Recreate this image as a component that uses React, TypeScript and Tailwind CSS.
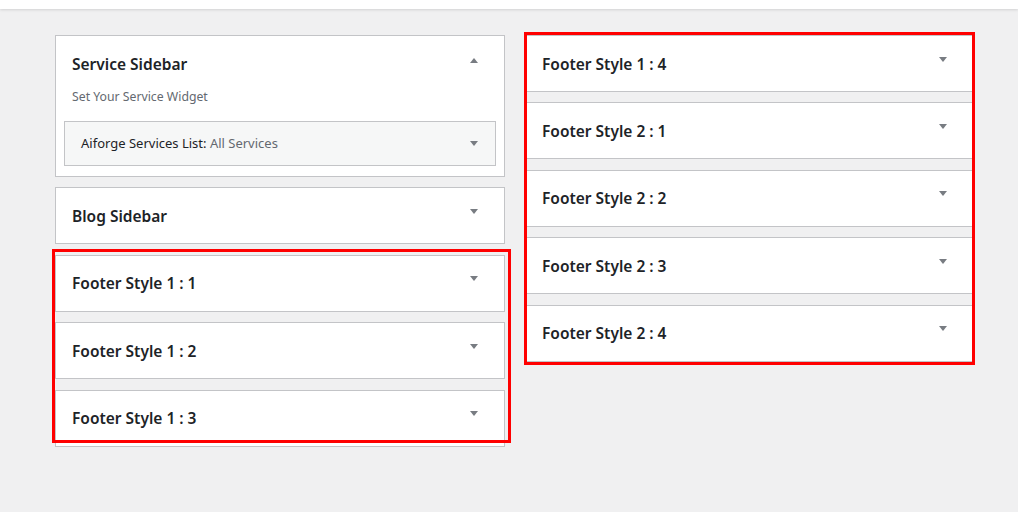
import React from 'react';

const Arrow: React.FC<{ up?: boolean }> = ({ up }) => (
  <svg width="10" height="6" viewBox="0 0 10 6" className="shrink-0" aria-hidden="true">
    {up ? <polygon points="1,6 5,1 9,6" fill="#787c82" /> : <polygon points="1,0 9,0 5,5" fill="#787c82" />}
  </svg>
);

const SidebarBox: React.FC<{ title: string }> = ({ title }) => (
  <div className="h-[57px] bg-white border border-[#c3c4c7] flex items-center justify-between pl-[16px] pr-[25px]">
    <h2 className="text-[15.5px] font-semibold text-[#1d2327] leading-6">{title}</h2>
    <div className="mb-[8px]">
      <Arrow />
    </div>
  </div>
);

const App: React.FC = () => {
  const leftFooters = ['Footer Style 1 : 1', 'Footer Style 1 : 2', 'Footer Style 1 : 3'];
  const rightFooters = ['Footer Style 1 : 4', 'Footer Style 2 : 1', 'Footer Style 2 : 2', 'Footer Style 2 : 3', 'Footer Style 2 : 4'];

  return (
    <div className="w-full h-[512px] bg-[#f0f0f1] overflow-hidden" style={{ fontFamily: '"Noto Sans", "Open Sans", Arial, sans-serif' }}>
      <div className="h-[9px] bg-white shadow-[0_1px_3px_rgba(0,0,0,0.13)]" />
      <div className="flex gap-[20px] pl-[55px] pt-[26px]">
        {/* left column */}
        <div className="w-[450px] flex flex-col gap-[10.4px]">
          <div className="bg-white border border-[#c3c4c7]">
            <div className="flex items-start justify-between pl-[16px] pr-[25px] pt-[16px]">
              <h2 className="text-[15.5px] font-semibold text-[#1d2327] leading-6">Service Sidebar</h2>
              <div className="mt-[5px]">
                <Arrow up />
              </div>
            </div>
            <p className="pl-[16px] mt-[12px] text-[12.25px] leading-[18px] text-[#646970]">Set Your Service Widget</p>
            <div className="mx-[8px] mt-[15px] mb-[10px] h-[45px] bg-[#f6f7f7] border border-[#c3c4c7] flex items-center justify-between pl-[16px] pr-[16px]">
              <span className="text-[13px] text-[#1d2327]">
                Aiforge Services List: <span className="text-[#646970]">All Services</span>
              </span>
              <Arrow />
            </div>
          </div>
          <SidebarBox title="Blog Sidebar" />
          <div className="relative flex flex-col gap-[10.4px]">
            {leftFooters.map((t) => (
              <SidebarBox key={t} title={t} />
            ))}
            <div className="absolute -left-[3px] -top-[6px] -right-[6px] bottom-[4px] border-[3px] border-[#ff0000] pointer-events-none" />
          </div>
        </div>

        {/* right column */}
        <div className="w-[449px]">
          <div className="relative flex flex-col gap-[10.4px]">
            {rightFooters.map((t) => (
              <SidebarBox key={t} title={t} />
            ))}
            <div className="absolute -left-[1px] -top-[3px] -right-[1px] -bottom-[3px] border-[3px] border-[#ff0000] pointer-events-none" />
          </div>
        </div>
      </div>
    </div>
  );
};

export default App;
